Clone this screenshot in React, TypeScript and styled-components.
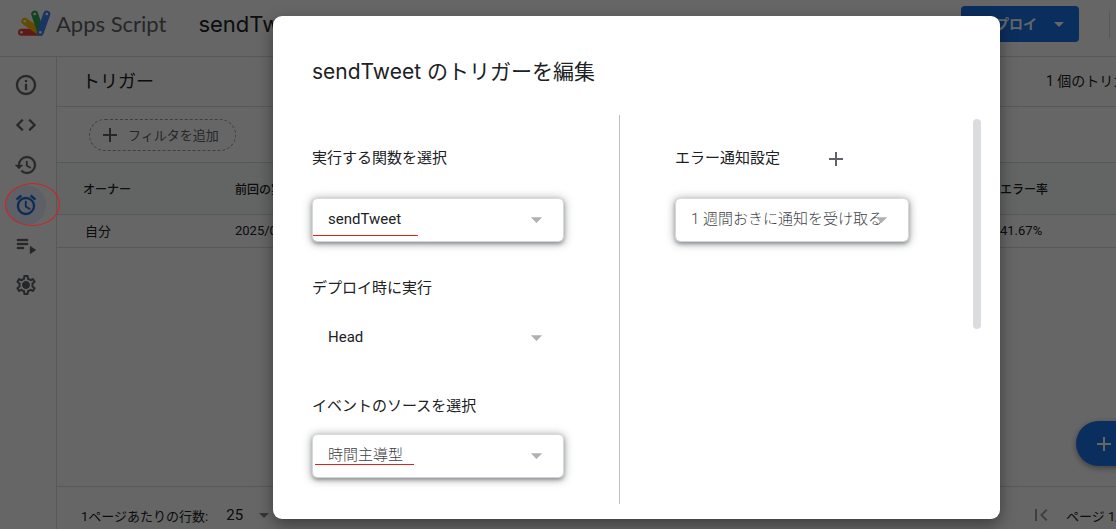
import React from "react";
import styled, { createGlobalStyle, css } from "styled-components";
import {
  MdAdd,
  MdAlarm,
  MdArrowDropDown,
  MdCode,
  MdFirstPage,
  MdHistory,
  MdOutlineInfo,
  MdOutlineSettings,
  MdPlaylistPlay,
} from "react-icons/md";

const brand = `"Lato", "Noto Sans CJK JP", sans-serif`;
const heading = `"Inter", "Noto Sans CJK JP", sans-serif`;
const body = `"Roboto", "Noto Sans CJK JP", sans-serif`;

const GlobalStyle = createGlobalStyle`
  * { box-sizing: border-box; }
  body { margin: 0; background: #fff; color: #202124; font-family: ${body}; }
  button, select { font: inherit; color: inherit; margin: 0; }
`;

const Page = styled.div`
  position: relative;
  display: flex;
  flex-direction: column;
  min-height: 100vh;
  overflow: hidden;
`;

const Header = styled.header`
  display: flex;
  align-items: center;
  height: 57px;
  padding: 0 0 8px 16px;
  border-bottom: 1px solid #dadce0;
  font-family: ${brand};
  font-size: 22px;
  line-height: 32px;
  white-space: nowrap;
`;

const Brand = styled.span`
  margin-left: 4px;
  color: #5f6368;
`;

const Project = styled.span`
  flex: 1;
  margin-left: 32px;
  font-family: ${heading};
`;

const DeployButton = styled.button`
  display: flex;
  align-items: center;
  justify-content: flex-end;
  gap: 10px;
  width: 118px;
  height: 36px;
  padding: 0 8px 0 0;
  border: 0;
  border-radius: 4px;
  background: #1a73e8;
  color: #fff;
  font-family: ${body};
  font-size: 14px;
  font-weight: 700;
`;

const HeaderRule = styled.span`
  width: 1px;
  height: 27px;
  margin: 0 6px 0 30px;
  background: #dadce0;
`;

const Columns = styled.div`
  display: flex;
  flex: 1;
`;

const Sidebar = styled.nav`
  display: flex;
  flex-direction: column;
  align-items: center;
  width: 57px;
  padding: 8px 5px 0 0;
  border-right: 1px solid #dadce0;
`;

const NavButton = styled.button<{ $active?: boolean }>`
  display: grid;
  place-items: center;
  width: 40px;
  height: 40px;
  padding: 0;
  border: 0;
  border-radius: 50%;
  background: ${(p) => (p.$active ? "#e8f0fe" : "transparent")};
  color: ${(p) => (p.$active ? "#1967d2" : "#5f6368")};
  > svg > path:not([fill="none"]) { stroke: currentColor; stroke-width: 0.3; }
`;

const Main = styled.main`
  display: flex;
  flex: 1;
  flex-direction: column;
  min-width: 0;
`;

const TitleBar = styled.div`
  display: flex;
  align-items: center;
  justify-content: space-between;
  height: 50px;
  padding: 0 0 4px 25px;
  border-bottom: 1px solid #dadce0;
  white-space: nowrap;
`;

const PageTitle = styled.h1`
  margin: 0;
  font-size: 18px;
  font-weight: 400;
`;

const TriggerCount = styled.span`
  width: 70px;
  font-size: 14px;
`;

const FilterBar = styled.div`
  display: flex;
  align-items: center;
  height: 56px;
  padding-left: 32px;
  border-bottom: 1px solid #dadce0;
`;

const FilterButton = styled.button`
  display: flex;
  align-items: center;
  gap: 6px;
  height: 32px;
  padding: 0 16px 0 8px;
  border: 1px dashed #9aa0a6;
  border-radius: 16px;
  background: transparent;
  color: #5f6368;
  font-size: 13px;
`;

const Table = styled.table`
  width: 100%;
  border-collapse: collapse;
  table-layout: fixed;
  text-align: left;
  white-space: nowrap;

  th {
    height: 51px;
    padding: 0 0 0 26px;
    border-bottom: 1px solid #dadce0;
    background: #f8f9fa;
    font-size: 12px;
    font-weight: 500;
  }
  td {
    height: 33px;
    padding: 0 0 0 28px;
    border-bottom: 1px solid #dadce0;
    font-size: 13px;
  }
  th + th, td + td { padding-left: 0; }
`;

const Footer = styled.footer`
  display: flex;
  align-items: center;
  justify-content: space-between;
  height: 43px;
  margin-top: auto;
  padding: 14px 0 0 24px;
  border-top: 1px solid #dadce0;
  font-size: 13px;
  white-space: nowrap;
`;

const PageSize = styled.label`
  display: flex;
  align-items: center;
  gap: 18px;
`;

const Pager = styled.div`
  display: flex;
  align-items: center;
  gap: 13px;
  width: 87px;
  button { display: flex; padding: 0; border: 0; background: none; color: #9aa0a6; }
`;

const AddTrigger = styled.button`
  position: absolute;
  right: -58px;
  bottom: 63px;
  display: flex;
  align-items: center;
  width: 98px;
  height: 45px;
  padding: 0 16px;
  border: 0;
  border-radius: 23px;
  background: #1a73e8;
  color: #fff;
  box-shadow: 0 2px 6px rgba(0, 0, 0, 0.4);
`;

const Backdrop = styled.div`
  position: absolute;
  inset: 0;
  padding: 16px 116px 10px 273px;
  background: rgba(0, 0, 0, 0.6);
`;

const Dialog = styled.section`
  padding: 0 19px 15px 39px;
  border-radius: 9px;
  background: #fff;
  box-shadow: 0 6px 16px rgba(0, 0, 0, 0.4);
`;

const DialogTitle = styled.h2`
  display: flex;
  align-items: center;
  height: 99px;
  margin: 0;
  padding-bottom: 12px;
  padding-top: 24px;
  font-family: ${heading};
  font-size: 21px;
  font-weight: 400;
  line-height: 32px;
`;

const DialogBody = styled.div`
  display: flex;
`;

const FieldColumn = styled.div<{ $divided?: boolean }>`
  display: flex;
  flex-direction: column;
  gap: 34px;
  padding: 18px 56px 27px 0;
  ${(p) =>
    p.$divided
      ? css`
          flex: 0 0 308px;
          border-right: 1px solid #bdbfc2;
        `
      : css`
          flex: 1;
          padding-left: 55px;
          padding-right: 65px;
        `}
`;

const Field = styled.div`
  display: flex;
  flex-direction: column;
  gap: 18px;
`;

const LabelRow = styled.div<{ $tall?: boolean }>`
  display: flex;
  align-items: center;
  gap: 44px;
  height: ${(p) => (p.$tall ? 48 : 24)}px;
  font-size: 15px;
  label { padding-bottom: 2px; }
  button { display: flex; padding: 4px 0 0; border: 0; background: none; color: #5f6368; }
`;

const SelectBox = styled.div<{ $raised?: boolean }>`
  position: relative;
  display: flex;
  align-items: center;
  height: 42px;
  margin: 0 0 0 1px;
  border-radius: 4px;
  box-shadow: ${(p) =>
    p.$raised
      ? "0 0 1px 1px #dadce0, 0 2px 4px rgba(60, 64, 67, 0.6), 0 1px 8px 2px rgba(60, 64, 67, 0.4)"
      : "none"};
  > svg { position: absolute; top: 7px; right: 13px; color: #b0b0b0; pointer-events: none; }
`;

const Select = styled.select<{ $light?: boolean }>`
  width: 100%;
  height: 42px;
  padding: 0 0 2px 15px;
  border: 0;
  border-radius: 4px;
  appearance: none;
  background: transparent;
  font-size: 15px;
  font-weight: ${(p) => (p.$light ? 300 : 400)};
  color: ${(p) => (p.$light ? "#404346" : "#202124")};
`;

const SizeSelect = styled.select`
  width: 42px;
  padding: 0;
  border: 0;
  appearance: none;
  background: transparent;
  font-size: 15px;
`;

const SizeBox = styled.span`
  display: flex;
  align-items: center;
  svg { margin-left: -16px; color: #80868b; }
`;

const Mark = styled.span<{ $left: number; $bottom: number; $width: number }>`
  position: absolute;
  left: ${(p) => p.$left}px;
  bottom: ${(p) => p.$bottom}px;
  width: ${(p) => p.$width}px;
  height: 1px;
  background: #e3201b;
`;

const ScrollThumb = styled.div`
  width: 8px;
  height: 210px;
  margin-top: 4px;
  border-radius: 4px;
  background: #dadce0;
`;

const Ring = styled.span`
  position: absolute;
  top: 183px;
  left: 5px;
  width: 55px;
  height: 43px;
  border: 1px solid #d6201f;
  border-radius: 50%;
`;

const logoBars = [
  { color: "#ea4335", from: [5.5, 24.3], to: [24, 24.3] },
  { color: "#fbbc04", from: [8.8, 13.3], to: [24, 24] },
  { color: "#34a853", from: [18.7, 6], to: [24, 22] },
  { color: "#4285f4", from: [30.8, 6], to: [24.3, 24.3] },
];

const Logo = () => (
  <svg width="36" height="32" viewBox="0 0 36 32" aria-hidden="true">
    {logoBars.map((b) => (
      <g key={b.color}>
        <line x1={b.from[0]} y1={b.from[1]} x2={b.to[0]} y2={b.to[1]} stroke={b.color} strokeWidth="7" strokeLinecap="round" />
        <circle cx={b.from[0]} cy={b.from[1]} r="1.3" fill="#fff" />
      </g>
    ))}
    <circle cx="24.3" cy="24.3" r="1.3" fill="#fff" />
  </svg>
);

const GearIcon = ({ size = 24 }: { size?: number }) => (
  <svg width={size} height={size} viewBox="0 0 24 24">
    <MdOutlineSettings size={24} />
    <circle cx="12" cy="12" r="3" fill="currentColor" />
  </svg>
);

const navItems = [
  { label: "概要", Icon: MdOutlineInfo },
  { label: "エディタ", Icon: MdCode },
  { label: "変更履歴", Icon: MdHistory },
  { label: "トリガー", Icon: MdAlarm, active: true },
  { label: "実行数", Icon: MdPlaylistPlay },
  { label: "設定", Icon: GearIcon },
];

interface PickerProps {
  id: string;
  label: string;
  value: string;
  raised?: boolean;
  light?: boolean;
  tall?: boolean;
  action?: React.ReactNode;
  mark?: React.ReactNode;
}

const Picker = ({ id, label, value, raised, light, tall, action, mark }: PickerProps) => (
  <Field>
    <LabelRow $tall={tall}>
      <label htmlFor={id}>{label}</label>
      {action}
    </LabelRow>
    <SelectBox $raised={raised}>
      <MdArrowDropDown size={27} />
      <Select id={id} $light={light}>
        <option>{value}</option>
      </Select>
      {mark}
    </SelectBox>
  </Field>
);

export default function App() {
  return (
    <>
      <GlobalStyle />
      <Page>
        <Header>
          <Logo />
          <Brand>Apps Script</Brand>
          <Project>sendTweet</Project>
          <DeployButton>
            デプロイ
            <MdArrowDropDown size={24} />
          </DeployButton>
          <HeaderRule />
        </Header>
        <Columns>
          <Sidebar>
            {navItems.map(({ label, Icon, active }) => (
              <NavButton key={label} aria-label={label} $active={active}>
                <Icon size={24} />
              </NavButton>
            ))}
          </Sidebar>
          <Main>
            <TitleBar>
              <PageTitle>トリガー</PageTitle>
              <TriggerCount>1 個のトリガー</TriggerCount>
            </TitleBar>
            <FilterBar>
              <FilterButton>
                <MdAdd size={24} />
                フィルタを追加
              </FilterButton>
            </FilterBar>
            <Table>
              <colgroup>
                <col style={{ width: 178 }} />
                <col />
                <col style={{ width: 116 }} />
              </colgroup>
              <thead>
                <tr>
                  <th>オーナー</th>
                  <th>前回の実行</th>
                  <th>エラー率</th>
                </tr>
              </thead>
              <tbody>
                <tr>
                  <td>自分</td>
                  <td>2025/0</td>
                  <td>41.67%</td>
                </tr>
              </tbody>
            </Table>
            <Footer>
              <PageSize>
                1ページあたりの行数:
                <SizeBox>
                  <SizeSelect>
                    <option>25</option>
                  </SizeSelect>
                  <MdArrowDropDown size={24} />
                </SizeBox>
              </PageSize>
              <Pager>
                <button aria-label="最初のページ">
                  <MdFirstPage size={24} />
                </button>
                ページ 1/
              </Pager>
            </Footer>
          </Main>
        </Columns>
        <AddTrigger aria-label="トリガーを追加">
          <MdAdd size={24} />
        </AddTrigger>
        <Backdrop>
          <Dialog role="dialog" aria-labelledby="dialog-title">
            <DialogTitle id="dialog-title">sendTweet のトリガーを編集</DialogTitle>
            <DialogBody>
              <FieldColumn $divided>
                <Picker id="fn" label="実行する関数を選択" value="sendTweet" raised tall mark={<Mark $left={0} $bottom={5} $width={105} />} />
                <Picker id="deploy" label="デプロイ時に実行" value="Head" />
                <Picker id="source" label="イベントのソースを選択" value="時間主導型" raised light mark={<Mark $left={2} $bottom={12} $width={99} />} />
              </FieldColumn>
              <FieldColumn>
                <Picker
                  id="notify"
                  label="エラー通知設定"
                  value="1 週間おきに通知を受け取る"
                  raised
                  light
                  tall
                  action={
                    <button aria-label="通知を追加">
                      <MdAdd size={24} />
                    </button>
                  }
                />
              </FieldColumn>
              <ScrollThumb />
            </DialogBody>
          </Dialog>
        </Backdrop>
        <Ring />
      </Page>
    </>
  );
}
